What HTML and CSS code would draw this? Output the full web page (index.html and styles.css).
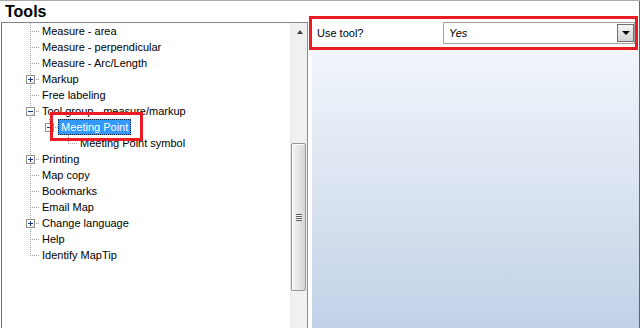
FILE: index.html
```html
<!DOCTYPE html>
<html>
<head>
<meta charset="utf-8">
<link rel="stylesheet" href="styles.css">
</head>
<body>
<div class="window">
  <div class="left">
    <div class="title">Tools</div>
    <div class="tree">
      <div class="nodes">
        <div class="row"><span class="c c-mid"></span><span class="label">Measure - area</span></div>
        <div class="row"><span class="c c-mid"></span><span class="label">Measure - perpendicular</span></div>
        <div class="row"><span class="c c-mid"></span><span class="label">Measure - Arc/Length</span></div>
        <div class="row"><span class="c c-mid"><span class="exp plus"></span></span><span class="label">Markup</span></div>
        <div class="row"><span class="c c-mid"></span><span class="label">Free labeling</span></div>
        <div class="row"><span class="c c-mid"><span class="exp minus"></span></span><span class="label">Tool group - measure/markup</span></div>
        <div class="row"><span class="c g-line"></span><span class="c c-last"><span class="exp minus"></span></span><span class="label sel">Meeting Point</span></div>
        <div class="row"><span class="c g-line"></span><span class="c"></span><span class="c c-last"></span><span class="label">Meeting Point symbol</span></div>
        <div class="row"><span class="c c-mid"><span class="exp plus"></span></span><span class="label">Printing</span></div>
        <div class="row"><span class="c c-mid"></span><span class="label">Map copy</span></div>
        <div class="row"><span class="c c-mid"></span><span class="label">Bookmarks</span></div>
        <div class="row"><span class="c c-mid"></span><span class="label">Email Map</span></div>
        <div class="row"><span class="c c-mid"><span class="exp plus"></span></span><span class="label">Change language</span></div>
        <div class="row"><span class="c c-mid"></span><span class="label">Help</span></div>
        <div class="row"><span class="c c-last"></span><span class="label">Identify MapTip</span></div>
      </div>
      <div class="scrollbar">
        <div class="sb-up"><span class="arrow-up"></span></div>
        <div class="sb-thumb"><span class="grip"></span></div>
      </div>
    </div>
  </div>
  <div class="right">
    <div class="panel">
      <div class="prop-row">
        <span class="prop-label">Use tool?</span>
        <div class="combo">
          <span class="combo-value">Yes</span>
          <span class="combo-btn"><span class="arrow-down"></span></span>
        </div>
      </div>
    </div>
  </div>
  <div class="mark mark-prop"></div>
  <div class="mark mark-node"></div>
</div>
</body>
</html>
```

FILE: styles.css
```css
html, body {
  margin: 0;
  padding: 0;
  background: #ffffff;
}

.window {
  position: relative;
  width: 640px;
  height: 328px;
  box-sizing: border-box;
  border-top: 1px solid #a9a9a9;
  display: flex;
  overflow: hidden;
  font-family: "Liberation Sans", Arial, sans-serif;
  font-size: 11px;
  color: #000000;
}

.left {
  width: 307px;
  margin-left: 1px;
  display: flex;
  flex-direction: column;
}

.title {
  height: 21px;
  line-height: 21px;
  padding-left: 4px;
  font-size: 16px;
  font-weight: bold;
  color: #000000;
}

.tree {
  flex: 1;
  min-height: 0;
  display: flex;
  border-top: 1px solid #828790;
  border-left: 1px solid #6f737a;
  border-right: 1px solid #8a8d93;
  background: #ffffff;
}

.nodes {
  flex: 1;
  padding-left: 19px;
}

.row {
  display: flex;
  align-items: center;
  height: 16px;
}

.c {
  position: relative;
  flex: 0 0 19px;
  height: 16px;
}

.g-line::before,
.c-mid::before {
  content: "";
  position: absolute;
  left: 9px;
  top: 0;
  width: 1px;
  height: 16px;
  background: repeating-linear-gradient(to bottom, #a0a0a0 0 1px, transparent 1px 2px);
}

.c-last::before {
  content: "";
  position: absolute;
  left: 9px;
  top: 0;
  width: 1px;
  height: 9px;
  background: repeating-linear-gradient(to bottom, #a0a0a0 0 1px, transparent 1px 2px);
}

.c-mid::after,
.c-last::after {
  content: "";
  position: absolute;
  left: 10px;
  top: 8px;
  width: 9px;
  height: 1px;
  background: repeating-linear-gradient(to right, transparent 0 1px, #a0a0a0 1px 2px);
}

.exp {
  position: absolute;
  z-index: 1;
  left: 5px;
  top: 4px;
  width: 9px;
  height: 9px;
  box-sizing: border-box;
  border: 1px solid #919191;
  background: linear-gradient(135deg, #ffffff 0%, #ffffff 45%, #e2e2e2 100%);
}

.exp::before {
  content: "";
  position: absolute;
  left: 1px;
  top: 3px;
  width: 5px;
  height: 1px;
  background: #1f3a87;
}

.plus::after {
  content: "";
  position: absolute;
  left: 3px;
  top: 1px;
  width: 1px;
  height: 5px;
  background: #1f3a87;
}

.label {
  display: block;
  height: 14px;
  line-height: 14px;
  margin-left: -1px;
  padding: 0 2px;
  border: 1px solid transparent;
  white-space: nowrap;
}

.label.sel {
  background: #3399ff;
  color: #ffffff;
  border: 1px dotted #10233f;
}

.scrollbar {
  flex: 0 0 17px;
  display: flex;
  flex-direction: column;
  background: #f0f0f0;
  border-left: 1px solid #e8e8e8;
  box-sizing: border-box;
}

.sb-up {
  height: 17px;
  display: flex;
  justify-content: center;
  align-items: center;
}

.arrow-up {
  width: 0;
  height: 0;
  border-left: 3px solid transparent;
  border-right: 3px solid transparent;
  border-bottom: 4px solid #404040;
  margin-left: 1px;
}

.sb-thumb {
  margin-top: 103px;
  margin-left: 0;
  margin-right: 1px;
  height: 148px;
  box-sizing: border-box;
  border: 1px solid #979797;
  border-radius: 2px;
  background: linear-gradient(to right, #f4f4f4 0%, #e8e8e8 45%, #d6d6d6 100%);
  box-shadow: inset 1px 1px 0 #ffffff;
  display: flex;
  justify-content: center;
  align-items: center;
}

.grip {
  width: 6px;
  height: 7px;
  background: repeating-linear-gradient(to bottom, #5f5f5f 0 1px, #f4f4f4 1px 2px);
}

.right {
  flex: 1;
  padding-left: 4px;
  padding-top: 15px;
  border-right: 1px solid #5b6573;
  display: flex;
  flex-direction: column;
  background: #ffffff;
}

.panel {
  flex: 1;
  background: linear-gradient(to bottom, #f7f9fc 0%, #eaf0f8 25%, #d8e2ef 60%, #c1d1e7 100%);
}

.prop-row {
  height: 33px;
  box-sizing: border-box;
  padding-top: 6px;
  padding-left: 5px;
  display: flex;
  align-items: flex-start;
  background: #ffffff;
}

.prop-label {
  width: 126px;
  line-height: 22px;
}

.combo {
  width: 192px;
  height: 22px;
  box-sizing: border-box;
  border: 1px solid #a5a5a5;
  display: flex;
  align-items: flex-start;
  background: #ffffff;
}

.combo-value {
  flex: 1;
  padding-left: 5px;
  line-height: 20px;
  font-style: italic;
}

.combo-btn {
  width: 17px;
  height: 18px;
  margin-top: 1px;
  box-sizing: border-box;
  border: 1px solid #6f6f6f;
  background: linear-gradient(to bottom, #f6f6f6 0%, #e4e4e4 50%, #d3d3d3 100%);
  display: flex;
  justify-content: center;
  align-items: center;
}

.arrow-down {
  width: 0;
  height: 0;
  border-left: 4px solid transparent;
  border-right: 4px solid transparent;
  border-top: 4px solid #000000;
}

.mark {
  position: absolute;
  box-sizing: border-box;
  border: 3px solid #ec1c24;
  z-index: 5;
}

.mark-prop {
  left: 309px;
  top: 15px;
  width: 329px;
  height: 34px;
}

.mark-node {
  left: 50px;
  top: 111px;
  width: 93px;
  height: 29px;
}
```
